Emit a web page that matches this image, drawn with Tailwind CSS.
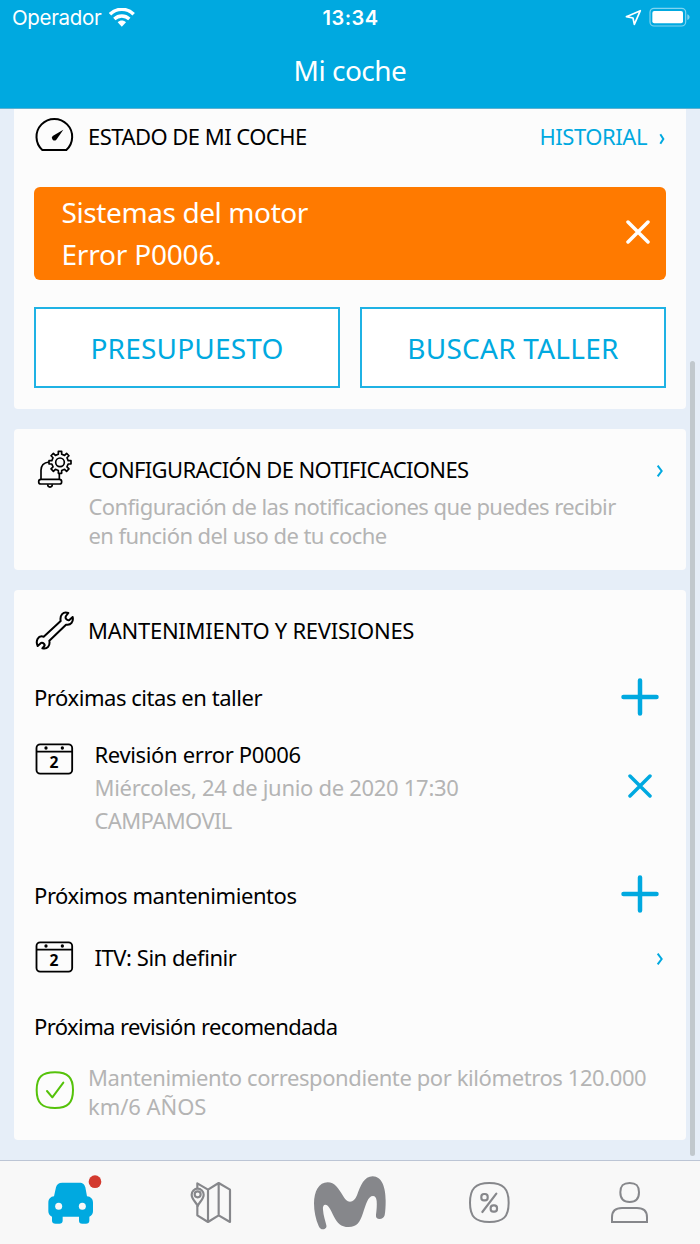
<!DOCTYPE html>
<html lang="es">
<head>
  <meta charset="UTF-8" />
  <meta name="viewport" content="width=device-width, initial-scale=1.0" />
  <script src="https://cdn.jsdelivr.net/npm/@tailwindcss/browser@4"></script>
  <title>Mi coche</title>
</head>
<body class="bg-[#e6eef8] font-['Noto_Sans',sans-serif] text-black">
  <div class="relative flex flex-col w-[700px] h-[1244px] overflow-hidden whitespace-nowrap">

    <!-- Status bar + title -->
    <header class="h-[109px] shrink-0 bg-[#00a9e0] border-b border-[#5fb0cf] text-white">
      <div class="grid grid-cols-3 items-center h-[35px] pl-[12px] pr-[9px] font-['Inter',sans-serif]">
        <div class="flex items-center gap-[7.5px]">
          <span class="text-[20.5px] tracking-[-0.32px] mt-[2px]">Operador</span>
          <svg class="w-[26px] h-[19px] mt-[-1px]" viewBox="0 0 78 57" fill="none" stroke="#fff">
            <path d="M3 19C23-1 54-1 74 19" stroke-width="10.500" />
            <path d="M16 33C29 21 48 21 61 33" stroke-width="10" />
            <path d="M38.500 56 26 43C33 36 44 36 51 43Z" fill="#fff" stroke="none" />
          </svg>
        </div>
        <div class="text-center text-[20px] font-semibold tracking-[0.45px] ml-[-2px]">13:34</div>
        <div class="flex items-center justify-end gap-[7px]">
          <svg class="w-[17px] h-[17px]" viewBox="0 0 51 51" fill="none" stroke="#fff" stroke-width="5" stroke-linejoin="round">
            <path d="M46 5 4 23 24 27 28 46Z" />
          </svg>
          <svg class="w-[42px] h-[20px] mt-[-2px]" viewBox="0 0 126 60" fill="none">
            <rect x="3" y="4" width="107" height="53" rx="12" stroke="#fff" stroke-opacity=".5" stroke-width="3.500" />
            <rect x="10" y="12" width="92" height="37" rx="6" fill="#fff" />
            <path d="M115 22C124 25 124 36 115 39Z" fill="#fff" fill-opacity=".5" />
          </svg>
        </div>
      </div>
      <h1 class="text-center text-[28px] leading-[70px] tracking-[-0.5px]">Mi coche</h1>
    </header>

    <main class="flex flex-col gap-[20.5px] pl-[14px] pr-[14px] h-[1051px]">
      <!-- Car status -->
      <section class="h-[299.500px] shrink-0 bg-[#fcfcfc] rounded-b-[4px] pl-[20px] pr-[20px]">
        <div class="flex items-center h-[55px] pr-[1px]">
          <svg class="w-[40px] h-[40px] mt-[-3px]" viewBox="102 345 120 120" fill="none" stroke="#000" stroke-width="6" stroke-linejoin="round">
            <path d="M127 450A53.500 53.500 0 1 1 199 450Z" />
            <path d="M190 389 169 419A7 7 0 1 1 158 408Z" fill="#000" stroke="none" />
          </svg>
          <h2 class="ml-[14px] mt-[-1px] text-[22px] tracking-[-0.53px]">ESTADO DE MI COCHE</h2>
          <span class="ml-auto text-[22px] tracking-[-0.45px] text-[#00a9e0]">HISTORIAL</span>
          <svg class="w-[6px] h-[12px] ml-[12px] mt-[4px]" viewBox="0 0 18 36" fill="none" stroke="#00a9e0" stroke-width="6">
            <path d="M4 4 13 18 4 32" />
          </svg>
        </div>
        <div class="flex items-center justify-between h-[93px] mt-[22.500px] pl-[27.5px] pr-[16px] rounded-[6px] bg-[#ff7a00] text-white text-[28px] leading-[42px]">
          <div>
            <p class="tracking-[-0.4px]">Sistemas del motor</p>
            <p class="tracking-[-0.2px]">Error P0006.</p>
          </div>
          <svg class="w-[24px] h-[24px] mt-[-2px]" viewBox="0 0 24 24" stroke="#fff" stroke-width="3.500" stroke-linecap="round">
            <path d="M2 2 22 22M22 2 2 22" />
          </svg>
        </div>
        <div class="grid grid-cols-2 gap-[20px] mt-[27.500px] text-[28px] text-[#00a9e0]">
          <button class="h-[81px] border-2 border-[#1fb2e4] bg-white tracking-[0.2px]">PRESUPUESTO</button>
          <button class="h-[81px] border-2 border-[#1fb2e4] bg-white tracking-[0.25px]">BUSCAR TALLER</button>
        </div>
      </section>

      <!-- Notifications -->
      <section class="flex h-[140.500px] shrink-0 bg-[#fcfcfc] rounded-[4px] pl-[21px] pr-[22px] pt-[19px]">
        <svg class="w-[40px] h-[42px]" viewBox="105 85 120 126" fill="none" stroke="#000" stroke-width="5" stroke-linejoin="round">
          <path d="M123 178V152C123 138 131 129 147 127M178 163V178" />
          <rect x="116" y="179" width="69" height="14" rx="7" />
          <path d="M143 194C143 205 157 205 157 194" />
          <circle cx="180" cy="128" r="13" />
          <path transform="translate(180 128)" d="M24.500-5 33-5 33 5 24.500 5 20.900 13.800 26.900 19.800 19.800 26.900 13.800 20.900 5 24.500 5 33-5 33-5 24.500-13.800 20.900-19.800 26.900-26.900 19.800-20.900 13.800-24.500 5-33 5-33-5-24.500-5-20.900-13.800-26.900-19.800-19.800-26.900-13.800-20.900-5-24.500-5-33 5-33 5-24.500 13.800-20.900 19.800-26.900 26.900-19.800 20.900-13.800Z" />
        </svg>
        <div class="ml-[13.5px] mt-[3px] text-[22px]">
          <h2 class="leading-[37px] tracking-[-0.63px]">CONFIGURACIÓN DE NOTIFICACIONES</h2>
          <p class="text-[#b4b4b4] leading-[29px] tracking-[-0.57px] mt-[4px]">Configuración de las notificaciones que puedes recibir<br />en función del uso de tu coche</p>
        </div>
        <svg class="w-[8px] h-[14px] ml-auto mt-[16px]" viewBox="0 0 24 42" fill="none" stroke="#00a9e0" stroke-width="6">
          <path d="M5 5 17 21 5 37" />
        </svg>
      </section>

      <!-- Maintenance -->
      <section class="h-[550px] shrink-0 bg-[#fcfcfc] rounded-[4px] pl-[20px] pr-[22px] text-[22px]">
        <div class="flex items-center h-[82px] pl-[1px]">
          <svg class="w-[40px] h-[40px] mt-[-2px]" viewBox="105 570 120 120" fill="none" stroke="#000" stroke-width="6" stroke-linejoin="round" stroke-linecap="round">
            <path d="M205 579C189 573 179 586 182 603L131 650C114 645 106 663 113 678L123 669C130 667 136 674 133 678L127 685C142 689 151 677 148 662L198 614C213 617 221 605 218 591L208 600C201 602 194 595 198 588Z" />
          </svg>
          <h2 class="ml-[13px] mt-[-1px] tracking-[-0.26px]">MANTENIMIENTO Y REVISIONES</h2>
        </div>

        <div class="flex items-center justify-between h-[50px] pr-[5px]">
          <h3 class="tracking-[-0.45px]">Próximas citas en taller</h3>
          <svg class="w-[38px] h-[38px] mt-[-1px]" viewBox="0 0 38 38" stroke="#00a9e0" stroke-width="4.500" stroke-linecap="round">
            <path d="M19 2.500V35.500M2.500 19H35.500" />
          </svg>
        </div>
        <div class="flex h-[148px] pt-[16px] pr-[12px]">
          <svg class="w-[40px] h-[34px] mt-[4px]" viewBox="102 248 120 102">
            <rect x="109.500" y="255" width="107" height="88" rx="11" fill="none" stroke="#000" stroke-width="5.500" />
            <path d="M110 277H216" stroke="#000" stroke-width="5.500" />
            <circle cx="138" cy="266" r="5" />
            <circle cx="187" cy="266" r="5" />
            <text x="162" y="326" text-anchor="middle" font-size="47" font-weight="700">2</text>
          </svg>
          <div class="ml-[20.5px] mt-[-0.500px] leading-[33px]">
            <p class="tracking-[-0.35px]">Revisión error P0006</p>
            <p class="tracking-[-0.3px] text-[#b4b4b4]">Miércoles, 24 de junio de 2020 17:30</p>
            <p class="tracking-[-0.6px] text-[#b4b4b4]">CAMPAMOVIL</p>
          </div>
          <svg class="w-[24px] h-[24px] ml-auto mt-[36px]" viewBox="0 0 24 24" stroke="#00a9e0" stroke-width="3.500" stroke-linecap="round">
            <path d="M2 2 22 22M22 2 2 22" />
          </svg>
        </div>

        <div class="flex items-center justify-between h-[50px] pr-[5px]">
          <h3 class="tracking-[-0.43px]">Próximos mantenimientos</h3>
          <svg class="w-[38px] h-[38px] mt-[-2px]" viewBox="0 0 38 38" stroke="#00a9e0" stroke-width="4.500" stroke-linecap="round">
            <path d="M19 2.500V35.500M2.500 19H35.500" />
          </svg>
        </div>
        <div class="flex items-center h-[74px]">
          <svg class="w-[40px] h-[34px]" viewBox="102 248 120 102">
            <rect x="109.500" y="255" width="107" height="88" rx="11" fill="none" stroke="#000" stroke-width="5.500" />
            <path d="M110 277H216" stroke="#000" stroke-width="5.500" />
            <circle cx="138" cy="266" r="5" />
            <circle cx="187" cy="266" r="5" />
            <text x="162" y="326" text-anchor="middle" font-size="47" font-weight="700">2</text>
          </svg>
          <p class="ml-[20.5px] tracking-[-0.45px]">ITV: Sin definir</p>
          <svg class="w-[8px] h-[14px] ml-auto mt-[4px]" viewBox="0 0 24 42" fill="none" stroke="#00a9e0" stroke-width="6">
            <path d="M5 5 17 21 5 37" />
          </svg>
        </div>

        <div class="flex items-center h-[66px]">
          <h3 class="mt-[-1px] tracking-[-0.6px]">Próxima revisión recomendada</h3>
        </div>
        <div class="flex pt-[3px] pl-[1px]">
          <svg class="w-[40px] h-[40px] mt-[7px]" viewBox="105 631 120 120" fill="none" stroke="#55c20a" stroke-width="6" stroke-linecap="round" stroke-linejoin="round">
            <path d="M165 638C204 638 219 653 219 691S204 745 165 745 110 730 110 691 126 638 165 638Z" />
            <path d="M141 694 157 713 190 669" />
          </svg>
          <p class="ml-[13px] leading-[29px] text-[#b4b4b4] tracking-[-0.41px]">Mantenimiento correspondiente por kilómetros 120.000<br /><span class="tracking-[-0.05px]">km/6 AÑOS</span></p>
        </div>
      </section>
    </main>

    <!-- Scroll indicator -->
    <div class="absolute left-[690px] top-[361px] w-[5px] h-[795px] rounded-full bg-[#c1c8cd]"></div>

    <!-- Tab bar -->
    <nav class="grid grid-cols-5 h-[84px] shrink-0 border-t border-[#bcc5d5] bg-[#f8f8f8]">
      <svg class="w-[140px] h-[83px]" viewBox="0 33 420 249">
        <path fill="#00a9e0" d="M187 98H238C249 98 254 104 256 112L261 139C272 140 279 147 279 158V184C279 192 275 197 268 200V212C268 218 264 221 258 221H247C240 221 237 218 237 212V200H188V212C188 218 184 221 178 221H167C160 221 156 218 156 212V200C149 197 145 192 145 184V158C145 147 152 140 162 139L168 112C170 104 176 98 187 98Z" />
        <circle cx="176" cy="169" r="10.500" fill="#f8f8f8" />
        <circle cx="247" cy="169" r="10.500" fill="#f8f8f8" />
        <circle cx="285" cy="95" r="19" fill="#d33a2f" />
      </svg>
      <svg class="w-[140px] h-[83px]" viewBox="420 33 420 249" fill="none" stroke="#86878b" stroke-width="6.500" stroke-linejoin="round">
        <path d="M592 115V100L624 119 656 99 690 119V216L656 196 624 216 592 196V168M624 119V216M656 99V196" />
        <path d="M593 168C588 156 575 148 575 134A18 18 0 0 1 611 134C611 148 598 156 593 168Z" />
        <circle cx="593" cy="133" r="9" />
      </svg>
      <svg class="w-[140px] h-[83px]" viewBox="60 33 420 249">
        <path fill="#86878b" d="M203 97C224 97 236 116 248 136C255 148 261 155 270 155C279 155 286 148 291 136C301 107 313 79 338 79C366 79 377 113 377 152C377 170 376 184 374 196C371 204 366 207 359 207C351 207 347 203 348 194C350 180 351 165 350 153C349 143 345 138 339 138C324 138 318 163 309 189C300 217 291 231 266 231C242 231 232 219 222 200C213 182 206 164 196 164C190 164 188 170 189 179C190 196 196 212 199 226C201 233 196 238 189 238C183 238 179 235 176 228C167 208 162 184 162 160C162 124 177 97 203 97Z" />
      </svg>
      <svg class="w-[140px] h-[83px]" viewBox="480 33 420 249" fill="none" stroke="#86878b" stroke-width="6" stroke-linecap="round">
        <path d="M688 99C730 99 746 116 746 158S730 216 688 216 630 200 630 158 646 99 688 99Z" />
        <rect x="664" y="132" width="19" height="19" rx="8" stroke-width="6.500" />
        <rect x="692" y="166" width="19" height="19" rx="8" stroke-width="6.500" />
        <path d="M709 131 667 186" stroke-width="6.500" />
      </svg>
      <svg class="w-[140px] h-[83px]" viewBox="180 183 420 249" fill="none" stroke="#86878b" stroke-width="6">
        <path d="M389 249C409 249 417 257 417 277S409 306 389 306 361 297 361 277 369 249 389 249Z" />
        <path d="M336 366V352C336 333 346 324 366 324H411C431 324 441 333 441 352V366Z" />
      </svg>
    </nav>
  </div>
</body>
</html>
